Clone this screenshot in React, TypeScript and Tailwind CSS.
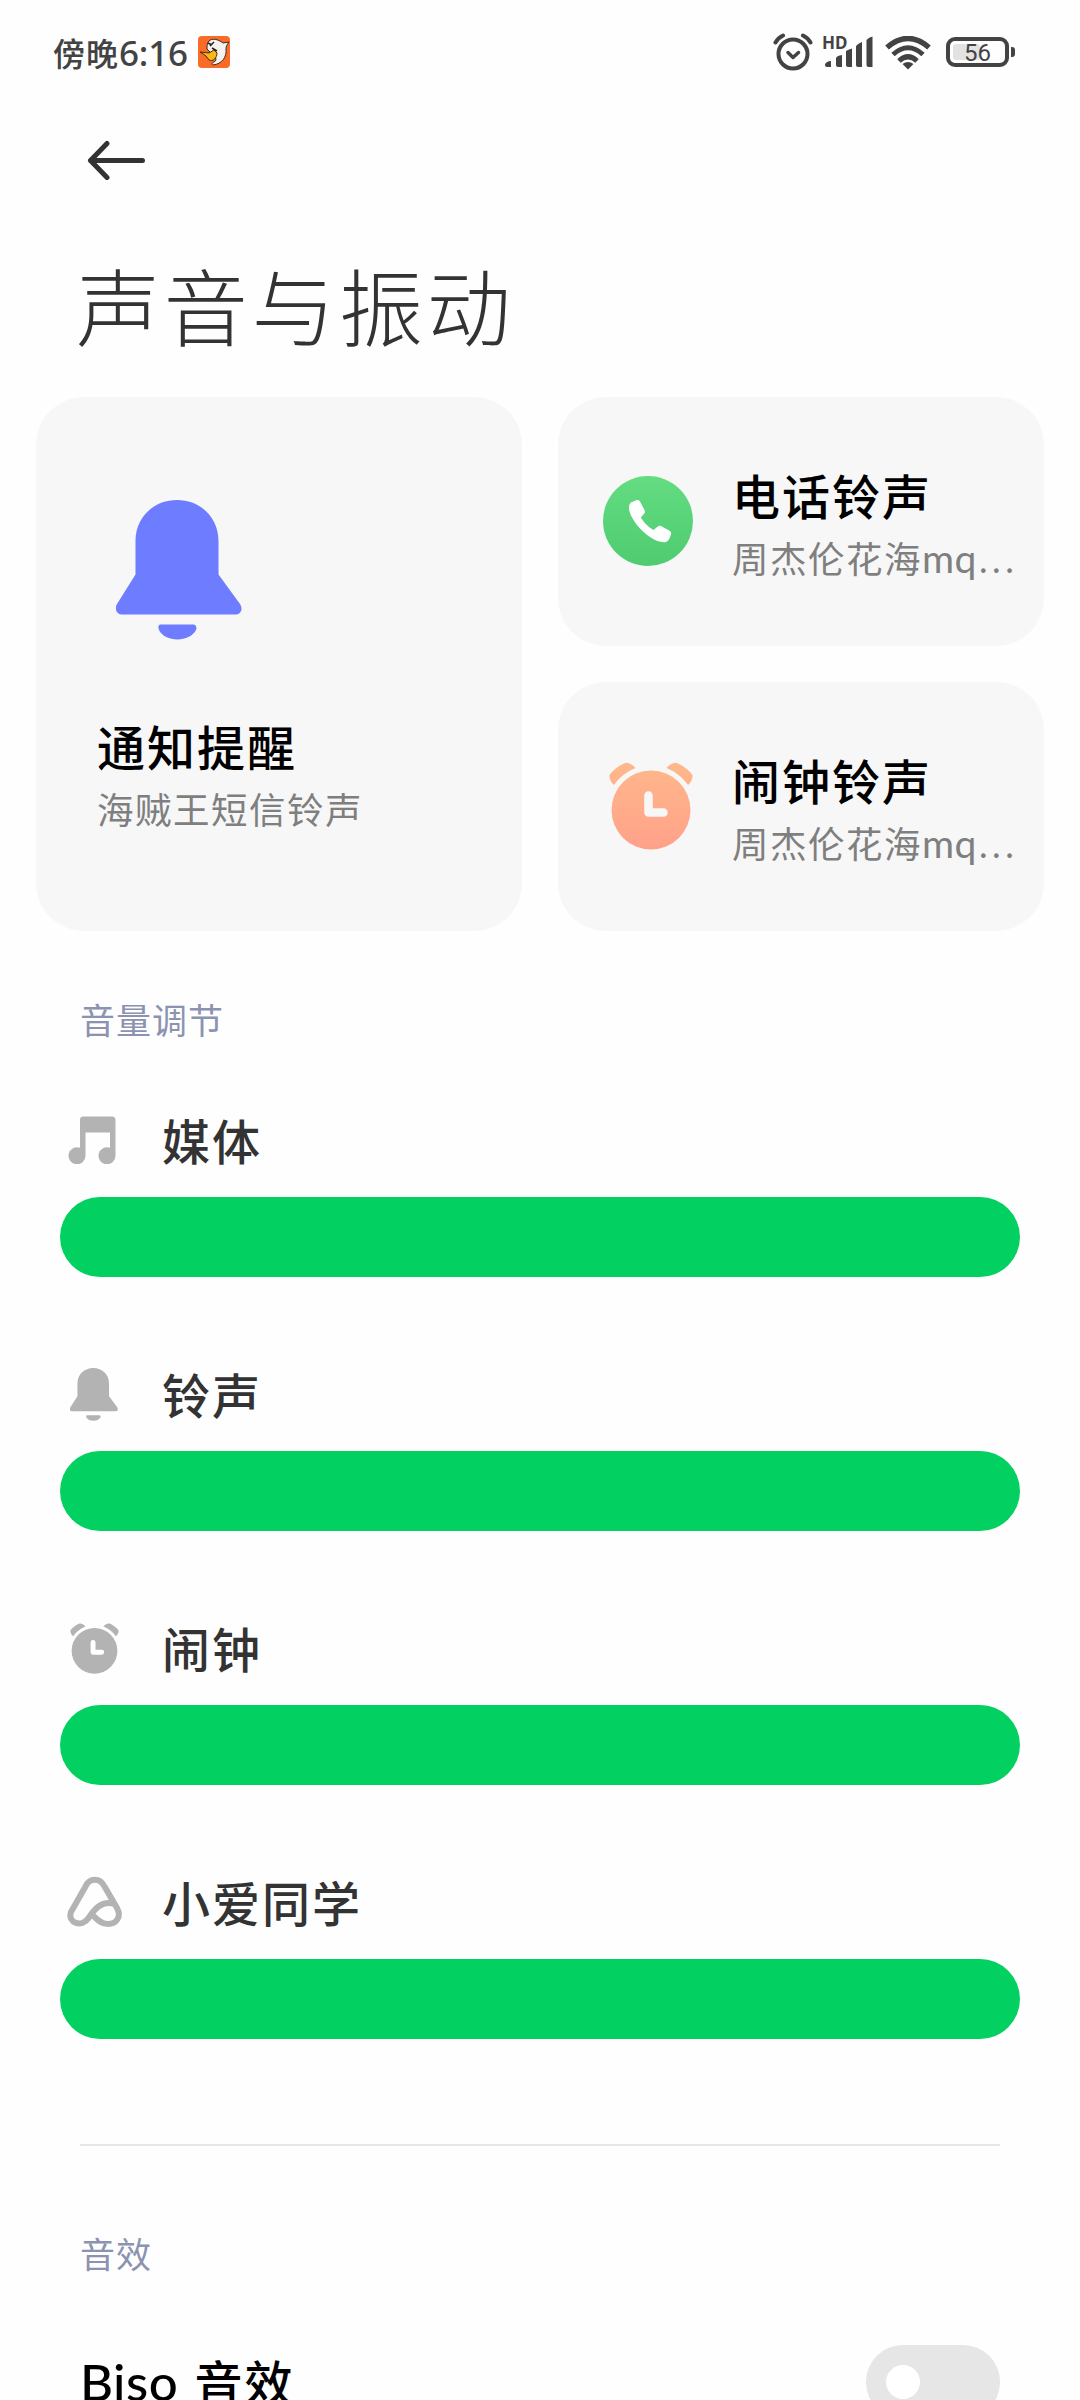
import type { ReactNode } from "react";

type IconProps = { className?: string };

function BellIcon({ className }: IconProps) {
  return (
    <svg viewBox="0 0 126 140" className={className} fill="currentColor" preserveAspectRatio="none">
      <path d="M61 0C84 0 102.500 17 102.500 41V74.500L124 104C127.500 109.500 124.500 114.500 119 114.500H6C1 114.500-2 109.500 1 104L19.500 74.500V41C19.500 17 38 0 61 0Z" />
      <path d="M45 124.500H77C80 124.500 81 127 80 130C77 136 69 139.500 61.500 139.500C53 139.500 46 136 43 130C42 127 42 124.500 45 124.500Z" />
    </svg>
  );
}

function AlarmIcon({ className, gradient, hand }: IconProps & { gradient?: boolean; hand: string }) {
  const fill = gradient ? "url(#alarm-fill)" : "currentColor";
  return (
    <svg viewBox="0 0 84 88" className={className}>
      {gradient && (
        <linearGradient id="alarm-fill" gradientUnits="userSpaceOnUse" x1="42" y1="0" x2="42" y2="88">
          <stop offset="0" stopColor="#ffb88a" />
          <stop offset="1" stopColor="#ffa18a" />
        </linearGradient>
      )}
      <circle cx="42" cy="48" r="39.500" fill={fill} />
      <path d="M15 1.500C18-.5 23 2 26.500 6C18 9.500 10 15.500 5 23C1.500 20 0 15 .5 13C3 9 10 3.500 15 1.500Z" fill={fill} />
      <path d="M69 1.500C66-.5 61 2 57.500 6C66 9.500 74 15.500 79 23C82.500 20 84 15 83.500 13C81 9 74 3.500 69 1.500Z" fill={fill} />
      <path d="M39.500 33.500V50.500H54.500" fill="none" stroke={hand} strokeWidth="8.500" strokeLinecap="round" strokeLinejoin="round" />
    </svg>
  );
}

function MusicIcon({ className }: IconProps) {
  return (
    <svg viewBox="0 0 48 48" className={className} fill="currentColor">
      <path d="M15 .5H44Q47.500 .5 47.500 4V39.500A8.500 8.500 0 1 1 42 31.800V16.500H17.500V39.500A8.500 8.500 0 1 1 12 31.800V4Q12 .5 15 .5Z" />
    </svg>
  );
}

function AssistantIcon({ className }: IconProps) {
  return (
    <svg viewBox="0 0 56 52" className={className} fill="none" stroke="currentColor" strokeWidth="6" strokeLinecap="round" strokeLinejoin="round">
      <path d="M47.500 28C34 24 27 34 21.500 42C15 52 0 47 4 36L18.500 10.500C22.500 1.500 33 1.500 37.500 10.500L50 32C55 41 49 48 41 48C33 48 29 42 24.500 38" />
    </svg>
  );
}

function PhoneIcon({ className }: IconProps) {
  return (
    <svg viewBox="0 0 90 90" className={className}>
      <linearGradient id="phone-fill" x1="0" y1="0" x2="0" y2="1">
        <stop offset="0" stopColor="#63dc82" />
        <stop offset="1" stopColor="#50cb70" />
      </linearGradient>
      <circle cx="45" cy="45" r="45" fill="url(#phone-fill)" />
      <path d="M28 26.500L33 24.300C35 23.500 36.300 24.300 37 25.500L41.500 34C42.300 35.500 42 36.800 41 37.800L37.800 41.500C41 46.500 45 51 50.500 54L54.500 50.800C55.500 49.800 57 49.500 58.500 50.200L66.500 54.800C68.300 55.800 68.300 57.500 67.800 59C66.500 63.500 64.500 66.300 61 66.300C56 66.300 47 62.500 39 54.500C31 46.500 26 37.500 26 32C26 29.500 26.500 27.500 28 26.500Z" fill="#fff" />
    </svg>
  );
}

function StatusBar() {
  return (
    <header className="flex h-[106px] items-center pl-[53px] pr-[65px] text-[#434343]">
      <span className="-mt-[2px] text-[32px] leading-[48px] tracking-[1px] font-medium">
        傍晚<span className="font-['Noto_Sans'] text-[35px] tracking-[-0.2px]">6:16</span>
      </span>
      <svg viewBox="0 0 32 32" className="ml-[10px] mt-[-2px] size-8">
        <rect width="32" height="32" rx="4" fill="#fb6b28" />
        <path d="M11 5C14 2 20 3 25 7L31 6C29 9 28 10 28 13C29 21 24 28 15 29C13 28 14 27 16 26C20 24 17 20 14 18L9 13C9 9 9 7 11 5Z" fill="#f4f1ee" stroke="#3b2a22" strokeWidth="1" />
        <path d="M2 16L11 17L16 14L19 17C19 22 15 26 11 24L8 20Z" fill="#f8b916" stroke="#4a2b12" strokeWidth="1" />
        <path d="M10 7L14 9M12 10L16 6M14 12L19 15" stroke="#27201d" strokeWidth="1.500" />
      </svg>
      <svg viewBox="0 0 40 38" className="ml-auto -mt-[2px] h-[38px] w-10" fill="none" stroke="currentColor" strokeLinecap="round" strokeLinejoin="round">
        <circle cx="20" cy="21" r="14.500" strokeWidth="4" />
        <path d="M15 19.500L20 24.500L25.500 19.500" strokeWidth="3.500" />
        <path d="M2.500 9.500Q5 5 10 2.500M37.500 9.500Q35 5 30 2.500" strokeWidth="4" />
      </svg>
      <div className="relative ml-[10px] -mt-[2px] h-8 w-[50px]">
        <span className="absolute -top-px -left-px font-['Noto_Sans'] text-[17px] leading-4 font-bold">HD</span>
        <svg viewBox="0 0 50 32" className="size-full" fill="currentColor">
          <path d="M2 28Q4 25 8 25V31H4Q2 31 2 29ZM13 22Q14 19.500 19 19V31H15Q13 31 13 29ZM23 15Q25 13.500 29 12.500V31H25Q23 31 23 29ZM33 10Q35 7.500 39 6V31H35Q33 31 33 29ZM43.500 4Q46 1 49.500 .5V31H45.500Q43.500 31 43.500 29Z" />
        </svg>
      </div>
      <svg viewBox="0 0 46 34" className="ml-[12px] -mt-px h-[34px] w-[46px]" fill="none" stroke="currentColor">
        <path d="M2 11.500Q23-6.500 44 11.500" strokeWidth="5.500" />
        <path d="M8 18.500Q23 5 38 18.500" strokeWidth="5" />
        <path d="M14 25Q23 16.500 32 25" strokeWidth="5" />
        <path d="M17.500 28Q23 24 28.500 28L23 33.500Z" fill="currentColor" stroke="none" />
      </svg>
      <div className="ml-[15px] -mt-[2px] flex h-[30px] w-[63px] items-center rounded-[9px] border-4 border-current pl-[3px]">
        <div className="flex h-4 w-[27px] items-center rounded-[3px] bg-[#e2e2e2] pl-[11px]">
          <span className="mt-[2px] font-[Roboto] text-[24px] leading-4">56</span>
        </div>
      </div>
      <div className="ml-[2px] -mt-[2px] h-[10px] w-1 rounded-r-[3px] bg-current" />
    </header>
  );
}

function RingtoneCard({ icon, title, value }: { icon: ReactNode; title: string; value: string }) {
  return (
    <div className="flex h-[249px] items-center rounded-[48px] bg-[#f7f7f7] pl-[45px]">
      {icon}
      <div className="ml-[39px] mt-[10px] whitespace-nowrap">
        <div className="text-[48px] leading-[64px] font-medium tracking-[2px] text-black">{title}</div>
        <div className="text-[36.500px] leading-[64px] tracking-[1.500px] text-[#7f7f7f]">
          {value}
          <span className="font-[Lato] text-[39px] tracking-[0.500px]">mq</span>
          <span className="ml-[2px] font-[Lato] tracking-[4.500px]">...</span>
        </div>
      </div>
    </div>
  );
}

const volumes = [
  { label: "媒体", icon: <MusicIcon className="ml-[1px] -mt-[2px] size-12" /> },
  { label: "铃声", icon: <BellIcon className="ml-[3px] h-[53px] w-[48px]" /> },
  { label: "闹钟", icon: <AlarmIcon hand="#fff" className="ml-[3px] h-[51px] w-[49px]" /> },
  { label: "小爱同学", icon: <AssistantIcon className="-mt-px h-[52px] w-14" /> },
];

export default function App() {
  return (
    <div className="h-[2400px] w-[1080px] overflow-hidden bg-[#fefefe] font-['Noto_Sans_CJK_SC',sans-serif]">
      <StatusBar />

      <div className="flex h-[108px] items-center pl-[87px]">
        <svg viewBox="0 0 60 40" className="h-10 w-[60px]" fill="none" stroke="#333" strokeWidth="5" strokeLinecap="round" strokeLinejoin="round">
          <path d="M20 3.500L3.500 20.500L20 37.500M3.500 20.500H55.500" />
        </svg>
      </div>

      <h1 className="mt-[34px] h-[112px] pl-[76px] text-[84px] leading-[112px] font-light tracking-[3.700px] text-[#333]">声音与振动</h1>

      <div className="mt-[37px] grid grid-cols-2 gap-9 px-9">
        <div className="row-span-2 rounded-[48px] bg-[#f7f7f7] pl-[61px] pt-[103px]">
          <BellIcon className="ml-[19px] h-[140px] w-[126px] text-[#6e7cff]" />
          <div className="mt-[73px] text-[48px] leading-[64px] font-medium tracking-[2px] text-black">通知提醒</div>
          <div className="text-[36.500px] leading-[64px] tracking-[1.500px] text-[#7f7f7f]">海贼王短信铃声</div>
        </div>
        <RingtoneCard icon={<PhoneIcon className="-mt-[1px] size-[90px]" />} title="电话铃声" value="周杰伦花海" />
        <RingtoneCard
          icon={<AlarmIcon gradient hand="#f7f7f7" className="ml-[6px] -mt-px h-[88px] w-[84px]" />}
          title="闹钟铃声"
          value="周杰伦花海"
        />
      </div>

      <h2 className="mt-[64px] pl-20 text-[35px] leading-[48px] tracking-[1px] text-[#8c93b0]">音量调节</h2>

      <div className="mt-[54px] flex flex-col gap-[74px] px-[60px]">
        {volumes.map((v) => (
          <div key={v.label}>
            <div className="flex h-[100px] items-center pb-[13px] pl-[7px] text-[#b3b3b3]">
              <div className="flex w-[95px] items-center">{v.icon}</div>
              <span className="-mt-[3px] text-[48px] leading-[64px] font-medium tracking-[2px] text-[#333]">{v.label}</span>
            </div>
            <div className="h-20 rounded-full bg-[#02d162]" />
          </div>
        ))}
      </div>

      <div className="mx-20 mt-[105px] h-[2px] bg-[#e6e6e6]" />

      <h2 className="mt-[83px] pl-20 text-[35px] leading-[48px] tracking-[1px] text-[#8c93b0]">音效</h2>

      <div className="mt-[68px] flex h-[74px] items-center justify-between px-20">
        <span className="-mt-[2px] text-[48px] leading-[64px] font-medium tracking-[2px] text-black">
          <span className="font-[Lato] text-[51px] tracking-[0.500px]">Biso </span>
          <span className="ml-[3px]">音效</span>
        </span>
        <div className="flex h-[74px] w-[134px] items-center rounded-full bg-[#e6e6e6] pl-5">
          <div className="size-[34px] rounded-full bg-white" />
        </div>
      </div>
    </div>
  );
}
